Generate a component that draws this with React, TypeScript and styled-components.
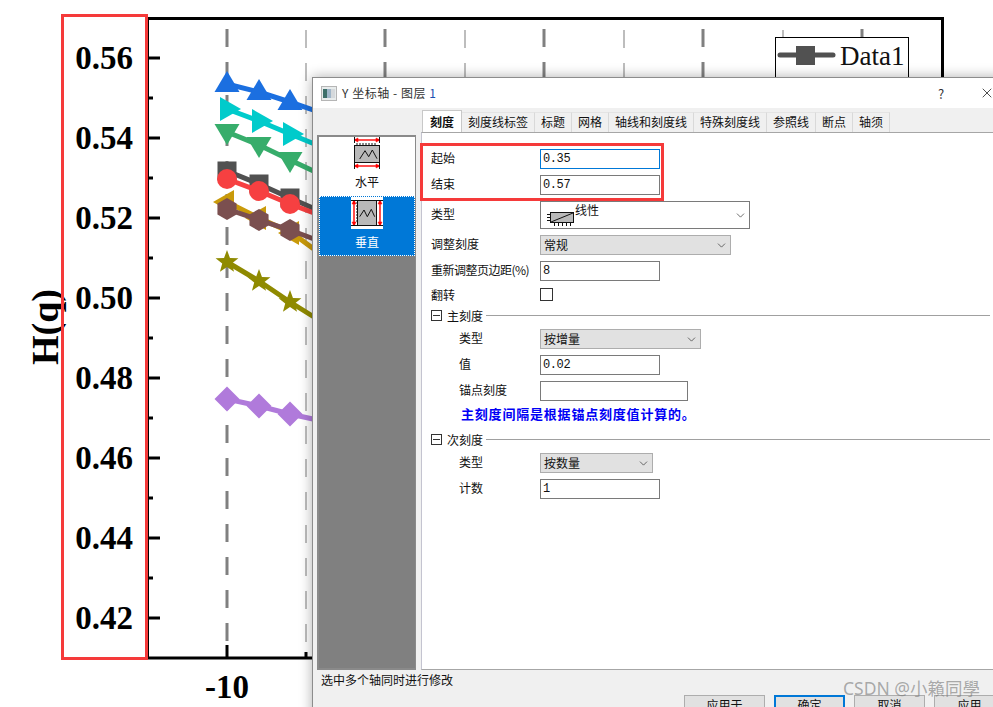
import { ReactElement } from 'react';
import styled, { createGlobalStyle } from 'styled-components';
import { ChevronDown, X } from 'lucide-react';

const UI_FONT = `'Noto Sans CJK SC', 'Noto Sans', sans-serif`;

const GlobalStyle = createGlobalStyle`
  html, body {
    margin: 0;
    padding: 0;
    background: #fff;
  }
`;

const Page = styled.div`
  position: relative;
  width: 993px;
  height: 707px;
  overflow: hidden;
  background: #fff;
`;

const ChartSvg = styled.svg`
  display: block;
`;

const AxisText = styled.text`
  font-family: 'Liberation Serif', serif;
  font-weight: 700;
  font-size: 33px;
  fill: #000;
`;

const AxisTitle = styled(AxisText)`
  font-size: 38px;
`;

const LegendText = styled.text`
  font-family: 'Liberation Serif', serif;
  font-size: 27px;
  fill: #111;
`;

const Highlight = styled.div`
  position: absolute;
  left: ${(p) => p.$left}px;
  top: ${(p) => p.$top}px;
  width: ${(p) => p.$width}px;
  height: ${(p) => p.$height}px;
  box-sizing: border-box;
  border: 3px solid #f53a3a;
  pointer-events: none;
`;

const Dialog = styled.div`
  position: absolute;
  left: 312px;
  top: 77px;
  width: 700px;
  height: 650px;
  box-sizing: border-box;
  border: 1px solid #8c8c8c;
  border-right: 0;
  background: #f0f0f0;
  display: flex;
  flex-direction: column;
  font-family: ${UI_FONT};
  font-size: 12px;
  color: #111;
  box-shadow: 0 0 12px rgba(0, 0, 0, 0.32);
`;

const TitleBar = styled.div`
  height: 30px;
  flex: none;
  background: #fff;
  display: flex;
  align-items: center;
  padding-left: 8px;
  gap: 5px;
`;

const TitleText = styled.div`
  font-size: 12px;
  color: #333;
  letter-spacing: 0.55px;
  margin-top: -2px;
  flex: 1;

  b {
    font-weight: 400;
    color: #1a50b0;
  }
`;

const HelpMark = styled.div`
  position: absolute;
  left: 625px;
  top: 6px;
  font-size: 13px;
  color: #333;
`;

const CloseMark = styled.div`
  position: absolute;
  left: 666px;
  top: 7px;
  color: #222;
  line-height: 0;
`;

const Body = styled.div`
  height: 562px;
  flex: none;
  display: flex;
`;

const Side = styled.div`
  width: 99px;
  margin-left: 4px;
  margin-right: 5px;
  padding-top: 27px;
  flex: none;
  display: flex;
  box-sizing: border-box;
`;

const SideList = styled.div`
  flex: 1;
  box-sizing: border-box;
  border: 2px solid #8a8a8a;
  border-right-width: 1px;
  background: #808080;
`;

const SideItem = styled.div`
  height: ${(p) => (p.$selected ? 60 : 59)}px;
  box-sizing: border-box;
  background: ${(p) => (p.$selected ? '#0078d7' : '#fff')};
  color: ${(p) => (p.$selected ? '#fff' : '#111')};
  outline: ${(p) => (p.$selected ? '1px dotted #fff' : 'none')};
  outline-offset: -1px;
  padding-top: ${(p) => (p.$selected ? 1 : 0)}px;
  display: flex;
  flex-direction: column;
  align-items: center;
`;

const SideLabel = styled.div`
  margin-top: 5px;
  line-height: 16px;
  font-size: 12px;
`;

const Main = styled.div`
  flex: 1;
  display: flex;
  flex-direction: column;
  padding-top: 4px;
  min-width: 0;
`;

const TabBar = styled.div`
  height: 20px;
  flex: none;
  display: flex;
  padding-left: 1px;
`;

const Tab = styled.div`
  box-sizing: border-box;
  padding: 0 6px;
  line-height: 18px;
  white-space: nowrap;
  border-right: 1px solid #d9d9d9;
  border-top: 1px solid #e4e4e4;
  ${(p) =>
    p.$active &&
    `
    position: relative;
    z-index: 1;
    height: 22px;
    margin-top: -2px;
    width: 40px;
    padding: 2px 0 0;
    text-align: center;
    font-weight: 700;
    background: #fff;
    border: 1px solid #c8c8c8;
    border-bottom: 0;
  `}
`;

const Panel = styled.div`
  flex: 1;
  box-sizing: border-box;
  background: #fff;
  border-top: 1px solid #a6a6a6;
  border-bottom: 1px solid #a6a6a6;
  border-left: 1px solid #c4c4d0;
  padding: 16px 0 0 9px;
  display: flex;
  flex-direction: column;
  gap: 6px;
`;

const Row = styled.div`
  display: grid;
  grid-template-columns: ${(p) => (p.$indent ? '81px' : '109px')} auto;
  justify-content: start;
  align-items: center;
  padding-left: ${(p) => (p.$indent ? 28 : 0)}px;
`;

const Label = styled.div`
  white-space: nowrap;
  font-size: 12px;
  line-height: 16px;
  margin-bottom: 2px;
`;

const NarrowLabel = styled(Label)`
  letter-spacing: -0.5px;
`;

const TextInput = styled.input`
  width: ${(p) => p.$width || 120}px;
  height: 20px;
  box-sizing: border-box;
  margin: 0;
  padding: 0 2px;
  border: 1px solid ${(p) => (p.$focused ? '#0078d7' : '#7a7a7a')};
  border-radius: 0;
  outline: none;
  background: #fff;
  font-family: 'Liberation Mono', monospace;
  font-size: 12px;
  letter-spacing: -0.4px;
  color: #111;
`;

const Select = styled.div`
  width: ${(p) => p.$width}px;
  height: 20px;
  box-sizing: border-box;
  border: 1px solid #adadad;
  background: #e1e1e1;
  display: flex;
  align-items: center;
  justify-content: space-between;
  padding: 0 2px 2px 3px;
  color: #111;

  svg {
    color: #333;
    flex: none;
    margin-top: 2px;
  }
`;

const TypeSelect = styled(Select)`
  height: 28px;
  border-color: #7a7a7a;
  background: #fff;
  padding-left: 4px;
`;

const TypeValue = styled.div`
  display: flex;
  align-items: flex-start;
  align-self: flex-start;
  line-height: 16px;

  svg {
    margin-top: 0;
  }
`;

const CheckBox = styled.div`
  width: 13px;
  height: 13px;
  box-sizing: border-box;
  border: 1px solid #333;
  background: #fff;
`;

const CheckRow = styled(Row)`
  height: 15px;
  grid-template-rows: 15px;

  ${Label} {
    line-height: 15px;
    margin-bottom: 0;
  }
`;

const GroupHeader = styled.div`
  width: 559px;
  height: 15px;
  flex: none;
  display: flex;
  align-items: center;
  margin-top: ${(p) => p.$spaced || 0}px;
`;

const Collapse = styled.div`
  width: 11px;
  height: 11px;
  box-sizing: border-box;
  border: 1px solid #333;
  display: flex;
  align-items: center;
  justify-content: center;
  margin-right: 5px;

  &::before {
    content: '';
    width: 7px;
    height: 1px;
    background: #333;
  }
`;

const GroupRule = styled.div`
  flex: 1;
  height: 1px;
  background: #a0a0a0;
  margin-left: 3px;
`;

const Note = styled.div`
  height: 14px;
  line-height: 14px;
  padding-left: 30px;
  font-size: 13px;
  font-weight: 700;
  letter-spacing: 0.8px;
  color: #0000f5;
  white-space: nowrap;
`;

const Footer = styled.div`
  flex: 1;
  display: flex;
  flex-direction: column;
`;

const Status = styled.div`
  height: 18px;
  line-height: 18px;
  padding: 1px 0 0 8px;
  box-sizing: content-box;
`;

const ButtonRow = styled.div`
  display: flex;
  gap: 9px;
  margin-top: 6px;
  padding-left: 371px;
`;

const Button = styled.div`
  width: ${(p) => p.$width || 71}px;
  height: 23px;
  box-sizing: border-box;
  flex: none;
  border: ${(p) => (p.$primary ? '2px solid #0078d7' : '1px solid #adadad')};
  background: #e1e1e1;
  text-align: center;
  line-height: 16px;
  padding-top: ${(p) => (p.$primary ? 0 : 1)}px;
`;

const Watermark = styled.div`
  position: absolute;
  left: 843px;
  top: 676px;
  font-family: 'Noto Sans', 'Noto Sans CJK SC', sans-serif;
  font-size: 17.5px;
  line-height: 24px;
  color: rgba(120, 120, 120, 0.6);
  white-space: nowrap;
`;

const MAJOR_Y = [58, 138, 218, 298, 378, 458, 538, 618];
const MINOR_Y = [98, 178, 258, 338, 418, 498, 578];
const DARK_X = [227, 385, 544, 703, 862];
const LIGHT_X = [306, 465, 624, 783];

const star = (cx: number, cy: number, r: number): string => {
  const pts: string[] = [];
  for (let i = 0; i < 10; i += 1) {
    const rad = i % 2 === 0 ? r : r * 0.42;
    const a = (Math.PI / 5) * i - Math.PI / 2;
    pts.push(`${cx + rad * Math.cos(a)},${cy + rad * Math.sin(a)}`);
  }
  return pts.join(' ');
};

const polygon = (cx: number, cy: number, r: number, kind: string): string => {
  switch (kind) {
    case 'up':
      return `${cx},${cy - 13} ${cx + 12.5},${cy + 8} ${cx - 12.5},${cy + 8}`;
    case 'down':
      return `${cx},${cy + 13} ${cx + 12.5},${cy - 8} ${cx - 12.5},${cy - 8}`;
    case 'right':
      return `${cx + 14},${cy} ${cx - 7},${cy - 12} ${cx - 7},${cy + 12}`;
    case 'left':
      return `${cx - 14},${cy} ${cx + 7},${cy - 12} ${cx + 7},${cy + 12}`;
    case 'diamond':
      return `${cx},${cy - r} ${cx + r},${cy} ${cx},${cy + r} ${cx - r},${cy}`;
    case 'hex':
      return `${cx},${cy - r} ${cx + r * 0.87},${cy - r / 2} ${cx + r * 0.87},${cy + r / 2} ${cx},${cy + r} ${cx - r * 0.87},${cy + r / 2} ${cx - r * 0.87},${cy - r / 2}`;
    default:
      return star(cx, cy, r);
  }
};

const SERIES = [
  { color: '#515151', kind: 'square', r: 9.5, pts: [[227, 171], [259, 184], [290, 198], [322, 212]] },
  { color: '#f64041', kind: 'circle', r: 10, pts: [[227, 179], [259, 191], [290, 204], [322, 216]] },
  { color: '#1b6fe0', kind: 'up', r: 12, pts: [[227, 84], [259, 92], [290, 102], [322, 113]] },
  { color: '#00cbcb', kind: 'right', r: 12, pts: [[227, 109], [259, 121], [290, 134], [322, 147]] },
  { color: '#37ad6b', kind: 'down', r: 12, pts: [[227, 132], [259, 145], [290, 160], [322, 175]] },
  { color: '#c99a0a', kind: 'left', r: 12, pts: [[227, 202], [259, 218], [292, 233], [322, 255]] },
  { color: '#7b4f4f', kind: 'hex', r: 11, pts: [[227, 209], [259, 220], [290, 230], [322, 242]] },
  { color: '#8f8a00', kind: 'star', r: 12, pts: [[227, 262], [259, 281], [290, 302], [322, 322]] },
  { color: '#b07adb', kind: 'diamond', r: 12.5, pts: [[227, 399], [259, 406], [290, 414], [322, 421]] },
];

const Chart = (): ReactElement => (
  <ChartSvg width="993" height="707" viewBox="0 0 993 707">
    {DARK_X.map((x) => (
      <line key={x} x1={x} x2={x} y1="29" y2="645" stroke="#808080" strokeWidth="3" strokeDasharray="18 15" />
    ))}
    {LIGHT_X.map((x) => (
      <line key={x} x1={x} x2={x} y1="30" y2="652" stroke="#bdbdbd" strokeWidth="2" strokeDasharray="18 15" />
    ))}
    <rect x="147.5" y="18.5" width="795" height="639.5" fill="none" stroke="#000" strokeWidth="3" />
    {MAJOR_Y.map((y) => (
      <line key={y} x1="148" x2="160" y1={y} y2={y} stroke="#000" strokeWidth="3" />
    ))}
    {MINOR_Y.map((y) => (
      <line key={y} x1="148" x2="153" y1={y} y2={y} stroke="#000" strokeWidth="3" />
    ))}
    <line x1="227" x2="227" y1="645" y2="657" stroke="#000" strokeWidth="3" />
    <line x1="306" x2="306" y1="652" y2="657" stroke="#000" strokeWidth="3" />
    {SERIES.map((s) => (
      <g key={s.color} fill={s.color}>
        <polyline
          points={s.pts.map((p) => p.join(',')).join(' ')}
          fill="none"
          stroke={s.color}
          strokeWidth="5"
        />
        {s.pts.slice(0, 3).map(([x, y]) => {
          if (s.kind === 'square') {
            return <rect key={x} x={x - s.r} y={y - s.r} width={s.r * 2} height={s.r * 2} />;
          }
          if (s.kind === 'circle') {
            return <circle key={x} cx={x} cy={y} r={s.r} />;
          }
          return <polygon key={x} points={polygon(x, y, s.r, s.kind)} />;
        })}
      </g>
    ))}
    <rect x="775.5" y="37.5" width="133" height="60" fill="#fff" stroke="#000" strokeWidth="1" />
    <line x1="780" x2="833" y1="55" y2="55" stroke="#515151" strokeWidth="5" strokeLinecap="round" />
    <rect x="796" y="46" width="19" height="19" fill="#515151" />
    <LegendText x="840" y="65">Data1</LegendText>
    {['0.56', '0.54', '0.52', '0.50', '0.48', '0.46', '0.44', '0.42'].map((t, i) => (
      <AxisText key={t} x="133" y={MAJOR_Y[i] + 11} textAnchor="end">
        {t}
      </AxisText>
    ))}
    <AxisText x="227" y="698" textAnchor="middle">-10</AxisText>
    <AxisTitle transform="translate(58 327) rotate(-90)" textAnchor="middle">
      H(q)
    </AxisTitle>
  </ChartSvg>
);

const WindowIcon = (): ReactElement => (
  <svg width="16" height="15" viewBox="0 0 16 15">
    <rect x="0.5" y="0.5" width="15" height="14" fill="#e8ecec" stroke="#b5b5b5" />
    <rect x="2" y="3" width="4" height="9" fill="#3d6f6a" />
    <rect x="6" y="3" width="4" height="9" fill="#9fb6c9" />
    <rect x="10" y="3" width="4" height="9" fill="#d5d9dc" />
  </svg>
);

const Ticks = ({ vertical }: { vertical?: boolean }): ReactElement => (
  <g stroke="#111" strokeWidth="1" fill="none">
    {[5, 8, 11, 14, 17, 20, 23].map((v) =>
      vertical ? (
        <line key={v} x1="5" x2="7" y1={v + 1} y2={v + 1} />
      ) : (
        <line key={v} y1="6" y2="8" x1={v + 1} x2={v + 1} />
      ),
    )}
  </g>
);

const HorizontalIcon = (): ReactElement => (
  <svg width="32" height="32" viewBox="0 0 32 32">
    <rect x="3.5" y="8.5" width="25" height="17" fill="#b9b9b9" stroke="#111" />
    <Ticks />
    <path d="M8.7 22L14 13.7l3.7 6 3.6-6.7 4.7 8.7" fill="none" stroke="#111" strokeWidth="1" />
    <g stroke="#f00" strokeWidth="1.4" fill="#f00">
      <line x1="4" x2="28" y1="3" y2="3" />
      <line x1="4" x2="28" y1="29" y2="29" />
      <path d="M3 3l4-2v4zM29 3l-4-2v4zM3 29l4-2v4zM29 29l-4-2v4z" strokeWidth="0.5" />
    </g>
    <g stroke="#111">
      <line x1="3.5" x2="3.5" y1="0" y2="6" />
      <line x1="28.5" x2="28.5" y1="0" y2="6" />
      <line x1="3.5" x2="3.5" y1="26" y2="32" />
      <line x1="28.5" x2="28.5" y1="26" y2="32" />
    </g>
  </svg>
);

const VerticalIcon = (): ReactElement => (
  <svg width="32" height="32" viewBox="0 0 32 32" style={{ background: '#fff' }}>
    <rect x="6.5" y="3.5" width="19" height="25" fill="#b9b9b9" stroke="#111" />
    <Ticks vertical />
    <path d="M8.7 19.7L13 13l3.3 6.7 4-7.4 3.4 7.4" fill="none" stroke="#111" strokeWidth="1" />
    <g stroke="#f00" strokeWidth="1.4" fill="#f00">
      <line x1="3" x2="3" y1="4" y2="28" />
      <line x1="29" x2="29" y1="4" y2="28" />
      <path d="M3 3l-2 4h4zM3 29l-2-4h4zM29 3l-2 4h4zM29 29l-2-4h4z" strokeWidth="0.5" />
    </g>
    <g stroke="#111">
      <line x1="0" x2="6" y1="3.5" y2="3.5" />
      <line x1="26" x2="32" y1="3.5" y2="3.5" />
      <line x1="0" x2="6" y1="28.5" y2="28.5" />
      <line x1="26" x2="32" y1="28.5" y2="28.5" />
    </g>
  </svg>
);

const LinearIcon = (): ReactElement => (
  <svg width="30" height="24" viewBox="0 0 30 24">
    <rect x="5.5" y="10.5" width="23" height="10" fill="#b9b9b9" stroke="#111" />
    <line x1="6" y1="20" x2="28" y2="11" stroke="#111" />
    <g stroke="#111">
      {[12, 15, 18].map((y) => (
        <line key={y} x1="2" x2="5" y1={y + 0.5} y2={y + 0.5} />
      ))}
      {[9, 13, 17, 21, 25].map((x) => (
        <line key={x} x1={x + 0.5} x2={x + 0.5} y1="21" y2="24" />
      ))}
    </g>
  </svg>
);

const TABS = ['刻度线标签', '标题', '网格', '轴线和刻度线', '特殊刻度线', '参照线', '断点', '轴须'];

const AxisDialog = (): ReactElement => (
  <Dialog>
    <TitleBar>
      <WindowIcon />
      <TitleText>
        Y 坐标轴 - 图层 <b>1</b>
      </TitleText>
      <HelpMark>?</HelpMark>
      <CloseMark>
        <X size={16} strokeWidth={1.2} />
      </CloseMark>
    </TitleBar>
    <Body>
      <Side>
        <SideList>
          <SideItem>
            <HorizontalIcon />
            <SideLabel>水平</SideLabel>
          </SideItem>
          <SideItem $selected>
            <VerticalIcon />
            <SideLabel>垂直</SideLabel>
          </SideItem>
        </SideList>
      </Side>
      <Main>
        <TabBar>
          <Tab $active>刻度</Tab>
          {TABS.map((t) => (
            <Tab key={t}>{t}</Tab>
          ))}
        </TabBar>
        <Panel>
          <Row>
            <Label>起始</Label>
            <TextInput readOnly value="0.35" $focused />
          </Row>
          <Row>
            <Label>结束</Label>
            <TextInput readOnly value="0.57" />
          </Row>
          <Row>
            <Label>类型</Label>
            <TypeSelect $width={210}>
              <TypeValue>
                <LinearIcon />
                线性
              </TypeValue>
              <ChevronDown size={13} strokeWidth={1.3} />
            </TypeSelect>
          </Row>
          <Row>
            <Label>调整刻度</Label>
            <Select $width={191}>
              常规
              <ChevronDown size={13} strokeWidth={1.3} />
            </Select>
          </Row>
          <Row>
            <NarrowLabel>重新调整页边距(%)</NarrowLabel>
            <TextInput readOnly value="8" />
          </Row>
          <CheckRow>
            <Label>翻转</Label>
            <CheckBox />
          </CheckRow>
          <GroupHeader>
            <Collapse />
            主刻度
            <GroupRule />
          </GroupHeader>
          <Row $indent>
            <Label>类型</Label>
            <Select $width={161}>
              按增量
              <ChevronDown size={13} strokeWidth={1.3} />
            </Select>
          </Row>
          <Row $indent>
            <Label>值</Label>
            <TextInput readOnly value="0.02" />
          </Row>
          <Row $indent>
            <Label>锚点刻度</Label>
            <TextInput readOnly value="" $width={148} />
          </Row>
          <Note>主刻度间隔是根据锚点刻度值计算的。</Note>
          <GroupHeader $spaced={5}>
            <Collapse />
            次刻度
            <GroupRule />
          </GroupHeader>
          <Row $indent>
            <Label>类型</Label>
            <Select $width={113}>
              按数量
              <ChevronDown size={13} strokeWidth={1.3} />
            </Select>
          </Row>
          <Row $indent>
            <Label>计数</Label>
            <TextInput readOnly value="1" />
          </Row>
        </Panel>
      </Main>
    </Body>
    <Footer>
      <Status>选中多个轴同时进行修改</Status>
      <ButtonRow>
        <Button $width={81}>应用于</Button>
        <Button $primary>确定</Button>
        <Button>取消</Button>
        <Button>应用</Button>
      </ButtonRow>
    </Footer>
  </Dialog>
);

const App = (): ReactElement => {
  return (
    <Page>
      <GlobalStyle />
      <Chart />
      <Highlight $left={61} $top={14} $width={87} $height={646} />
      <AxisDialog />
      <Highlight $left={420} $top={143} $width={244} $height={58} />
      <Watermark>CSDN @小籟同學</Watermark>
    </Page>
  );
};

export default App;
